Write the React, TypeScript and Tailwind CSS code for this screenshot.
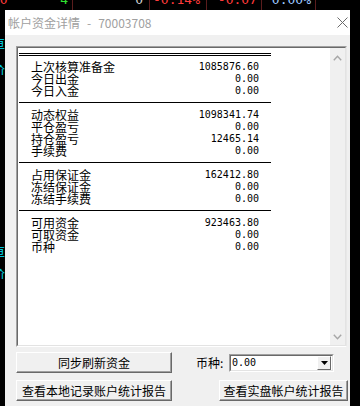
const cjk = "font-['Noto_Sans_CJK_SC','Noto_Sans',sans-serif]";
const mono = "font-['DejaVu_Sans_Mono','Liberation_Mono',monospace]";

type Row = { label: string; value: string };

const groups: Row[][] = [
  [
    { label: "上次核算准备金", value: "1085876.60" },
    { label: "今日出金", value: "0.00" },
    { label: "今日入金", value: "0.00" },
  ],
  [
    { label: "动态权益", value: "1098341.74" },
    { label: "平仓盈亏", value: "0.00" },
    { label: "持仓盈亏", value: "12465.14" },
    { label: "手续费", value: "0.00" },
  ],
  [
    { label: "占用保证金", value: "162412.80" },
    { label: "冻结保证金", value: "0.00" },
    { label: "冻结手续费", value: "0.00" },
  ],
  [
    { label: "可用资金", value: "923463.80" },
    { label: "可取资金", value: "0.00" },
    { label: "币种", value: "0.00" },
  ],
];

// fragments of the quote table behind the dialog (left strip)
const leftStrip = [
  { t: "亘", c: "text-[#00e5ff]", h: "h-[26px]" },
  { t: "价", c: "text-[#00e5ff]", h: "h-[27px]" },
  { t: "2", c: "text-[#2fe22f]", h: "h-[25px]" },
  { t: "7", c: "text-[#2fe22f]", h: "h-[28px]" },
  { t: "9", c: "text-[#2fe22f]", h: "h-[27px]" },
  { t: "0", c: "text-[#2fe22f]", h: "h-[28px]" },
  { t: "0", c: "text-[#2fe22f]", h: "h-[25px]" },
  { t: "1", c: "text-[#ff3b3b]", h: "h-[22px]" },
  { t: "亘", c: "text-[#00e5ff]", h: "h-[22px]" },
  { t: "价", c: "text-[#00e5ff]", h: "h-[31px]" },
  { t: "2", c: "text-[#2fe22f]", h: "h-[24px]" },
  { t: "7", c: "text-[#2fe22f]", h: "h-[26px]" },
  { t: "9", c: "text-[#2fe22f]", h: "h-[29px]" },
  { t: "0", c: "text-[#2fe22f]", h: "h-[26px]" },
  { t: "0", c: "text-[#2fe22f]", h: "h-[26px]" },
];

function ClassicButton({ label, className }: { label: string; className: string }) {
  return (
    <button
      className={`${className} h-[21px] border border-t-white border-l-white border-b-[#696969] border-r-[#696969] bg-[#f0f0f0] shadow-[inset_-1px_-1px_0_#a0a0a0] ${cjk} text-[12px] leading-[19px] text-black`}
    >
      {label}
    </button>
  );
}

function Chevron({ up }: { up?: boolean }) {
  return (
    <svg width="9" height="6" viewBox="0 0 9 6" className="block">
      <path
        d={up ? "M0.8 5.2 L4.5 1.2 L8.2 5.2" : "M0.8 0.8 L4.5 4.8 L8.2 0.8"}
        fill="none"
        stroke="#a6a6a6"
        strokeWidth="1.4"
      />
    </svg>
  );
}

export default function App() {
  return (
    <div className="relative h-[406px] w-[360px] overflow-hidden bg-black">
      {/* quote table behind */}
      <div className={`flex h-[10px] overflow-hidden ${mono} text-[13px] leading-[13px]`}>
        <div className="-mt-[7px] flex w-[73px] justify-between border-r border-[#5a1d1d]">
          <span className="-ml-[8px] text-[#ff3b3b]">10</span>
          <span className="pr-[4px] text-[#2fe22f]">4</span>
        </div>
        <div className="-mt-[7px] w-[77px] border-r border-[#5a1d1d] pr-[6px] text-right text-[#d0d0d0]">0</div>
        <div className="-mt-[7px] w-[57px] border-r border-[#5a1d1d] pr-[6px] text-right text-[#ff3b3b]">-0.14%</div>
        <div className="-mt-[7px] w-[55px] border-r border-[#5a1d1d] pr-[4px] text-right text-[#ff3b3b]">-0.07</div>
        <div className="-mt-[7px] w-[54px] border-r border-[#5a1d1d] pr-[4px] text-right text-[#9ec8ff]">0.00%</div>
        <div className="flex-1" />
      </div>
      <div className={`flex w-[5px] flex-col overflow-hidden pt-[28px] ${cjk} text-[11px] leading-[11px]`}>
        {leftStrip.map((f, i) => (
          <div key={i} className={`${f.h} ${f.c} -ml-[6px]`}>
            {f.t}
          </div>
        ))}
      </div>

      {/* dialog */}
      <div className="absolute left-[5px] top-[10px] flex h-[396px] w-[345px] flex-col bg-[#f0f0f0]">
        <div className="flex h-[25px] items-center justify-between bg-white pl-[3px] pr-[2px]">
          <div className={`${cjk} text-[12px] leading-[14px] text-[#a0a0a0]`}>
            帐户资金详情<span className="mx-[7px]">-</span>70003708
          </div>
          <svg width="11" height="11" viewBox="0 0 11 11">
            <path d="M0.5 0.5 L10.5 10.5 M10.5 0.5 L0.5 10.5" stroke="#6a6a6a" strokeWidth="1" />
          </svg>
        </div>

        <div className="flex flex-col pl-[11px] pt-[11px]">
          {/* list box */}
          <div className="h-[301px] w-[331px] border-t border-l border-b border-r border-t-[#a0a0a0] border-l-[#a0a0a0] border-b-white border-r-[#e8e8e8]">
            <div className="flex h-full border-t border-l border-b border-r border-t-[#696969] border-l-[#696969] border-b-[#e3e3e3] border-r-[#e3e3e3] bg-white">
              <div className="ml-[1px] w-[252px] pt-[5px]">
                <div className="h-px bg-black" />
                <div className="mt-px h-px bg-black" />
                {groups.map((g, gi) => (
                  <div key={gi}>
                    <div className={gi === 0 ? "pt-[5px] pb-[5px]" : "pt-[6px] pb-[5px]"}>
                      {g.map((r) => (
                        <div key={r.label} className="flex h-[12px] items-center justify-between pl-[12px] pr-[12px]">
                          <span className={`${cjk} text-[12px] leading-[12px] text-black`}>{r.label}</span>
                          <span className={`${mono} text-[10px] leading-[12px] text-black`}>{r.value}</span>
                        </div>
                      ))}
                    </div>
                    {gi < groups.length - 1 && <div className="h-px bg-black" />}
                  </div>
                ))}
              </div>
              <div className="flex-1" />
              <div className="flex w-[15px] flex-col items-center justify-between bg-[#f0f0f0] pt-[7px] pb-[5px]">
                <Chevron up />
                <Chevron />
              </div>
            </div>
          </div>

          {/* controls */}
          <div className="mt-[5px] flex items-center">
            <ClassicButton label="同步刷新资金" className="w-[156px]" />
            <span className={`ml-[24px] w-[33px] ${cjk} text-[12px] leading-[14px] text-black`}>币种:</span>
            <div className="flex h-[18px] w-[105px] border border-t-[#a0a0a0] border-l-[#a0a0a0] border-b-white border-r-white">
              <div className="flex flex-1 items-center justify-between border border-t-[#696969] border-l-[#696969] border-b-[#e3e3e3] border-r-[#e3e3e3] bg-white pl-[1px] pr-[1px]">
                <span className={`${mono} text-[10px] leading-[12px] text-black`}>0.00</span>
                <div className="flex h-[14px] w-[14px] items-center justify-center border border-t-white border-l-white border-b-[#696969] border-r-[#696969] bg-[#f0f0f0]">
                  <svg width="7" height="4" viewBox="0 0 7 4">
                    <path d="M0 0 L7 0 L3.5 4 Z" fill="#000" />
                  </svg>
                </div>
              </div>
            </div>
          </div>
          <div className="mt-[7px] flex">
            <ClassicButton label="查看本地记录账户统计报告" className="w-[156px]" />
            <ClassicButton label="查看实盘帐户统计报告" className="ml-[47px] w-[129px]" />
          </div>
        </div>
      </div>
    </div>
  );
}
